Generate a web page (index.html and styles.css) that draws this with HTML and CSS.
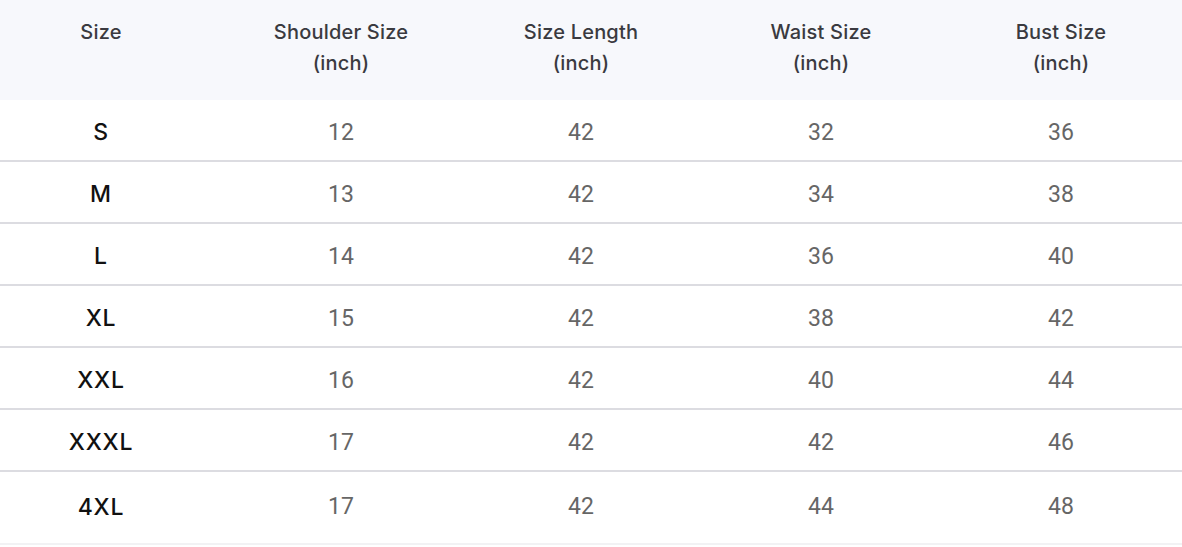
FILE: index.html
```html
<!DOCTYPE html>
<html>
<head>
<meta charset="utf-8">
<link rel="stylesheet" href="styles.css">
</head>
<body>
<div class="table">
  <div class="row head">
    <div class="cell first">Size</div>
    <div class="cell">Shoulder Size<br>(inch)</div>
    <div class="cell">Size Length<br>(inch)</div>
    <div class="cell">Waist Size<br>(inch)</div>
    <div class="cell">Bust Size<br>(inch)</div>
  </div>
  <div class="row"><div class="cell first">S</div><div class="cell">12</div><div class="cell">42</div><div class="cell">32</div><div class="cell">36</div></div>
  <div class="row"><div class="cell first">M</div><div class="cell">13</div><div class="cell">42</div><div class="cell">34</div><div class="cell">38</div></div>
  <div class="row"><div class="cell first">L</div><div class="cell">14</div><div class="cell">42</div><div class="cell">36</div><div class="cell">40</div></div>
  <div class="row"><div class="cell first">XL</div><div class="cell">15</div><div class="cell">42</div><div class="cell">38</div><div class="cell">42</div></div>
  <div class="row"><div class="cell first">XXL</div><div class="cell">16</div><div class="cell">42</div><div class="cell">40</div><div class="cell">44</div></div>
  <div class="row"><div class="cell first">XXXL</div><div class="cell">17</div><div class="cell">42</div><div class="cell">42</div><div class="cell">46</div></div>
  <div class="row last"><div class="cell first">4XL</div><div class="cell">17</div><div class="cell">42</div><div class="cell">44</div><div class="cell">48</div></div>
</div>
</body>
</html>
```
FILE: styles.css
```css
html, body {
  margin: 0;
  padding: 0;
  background: #ffffff;
}
.table {
  width: 1182px;
}
.row {
  display: grid;
  grid-template-columns: 221px repeat(4, 240px);
  height: 60px;
  border-bottom: 2px solid #dcdce1;
  align-items: center;
}
.row .cell {
  text-align: center;
  font-family: Roboto, "Liberation Sans", sans-serif;
  font-size: 23px;
  color: #666666;
  padding-top: 4px;
}
.row .cell.first {
  font-family: Inter, "Liberation Sans", sans-serif;
  font-weight: 500;
  font-size: 23px;
  letter-spacing: 0.8px;
  color: #111111;
  padding-right: 19px;
}
.row.head {
  height: 100px;
  border-bottom: none;
  background: #f7f8fc;
  align-items: start;
}
.row.head .cell {
  font-family: Inter, "Liberation Sans", sans-serif;
  font-weight: 500;
  font-size: 20px;
  line-height: 31px;
  letter-spacing: 0.2px;
  color: #3a3a40;
  padding-top: 17px;
}
.row.head .cell.first {
  font-size: 20px;
  letter-spacing: 0.2px;
  color: #3a3a40;
}
.row.last {
  height: 71px;
  border-bottom: 2px solid #f2f2f4;
  align-items: start;
}
.row.last .cell {
  padding-top: 21px;
}
```
